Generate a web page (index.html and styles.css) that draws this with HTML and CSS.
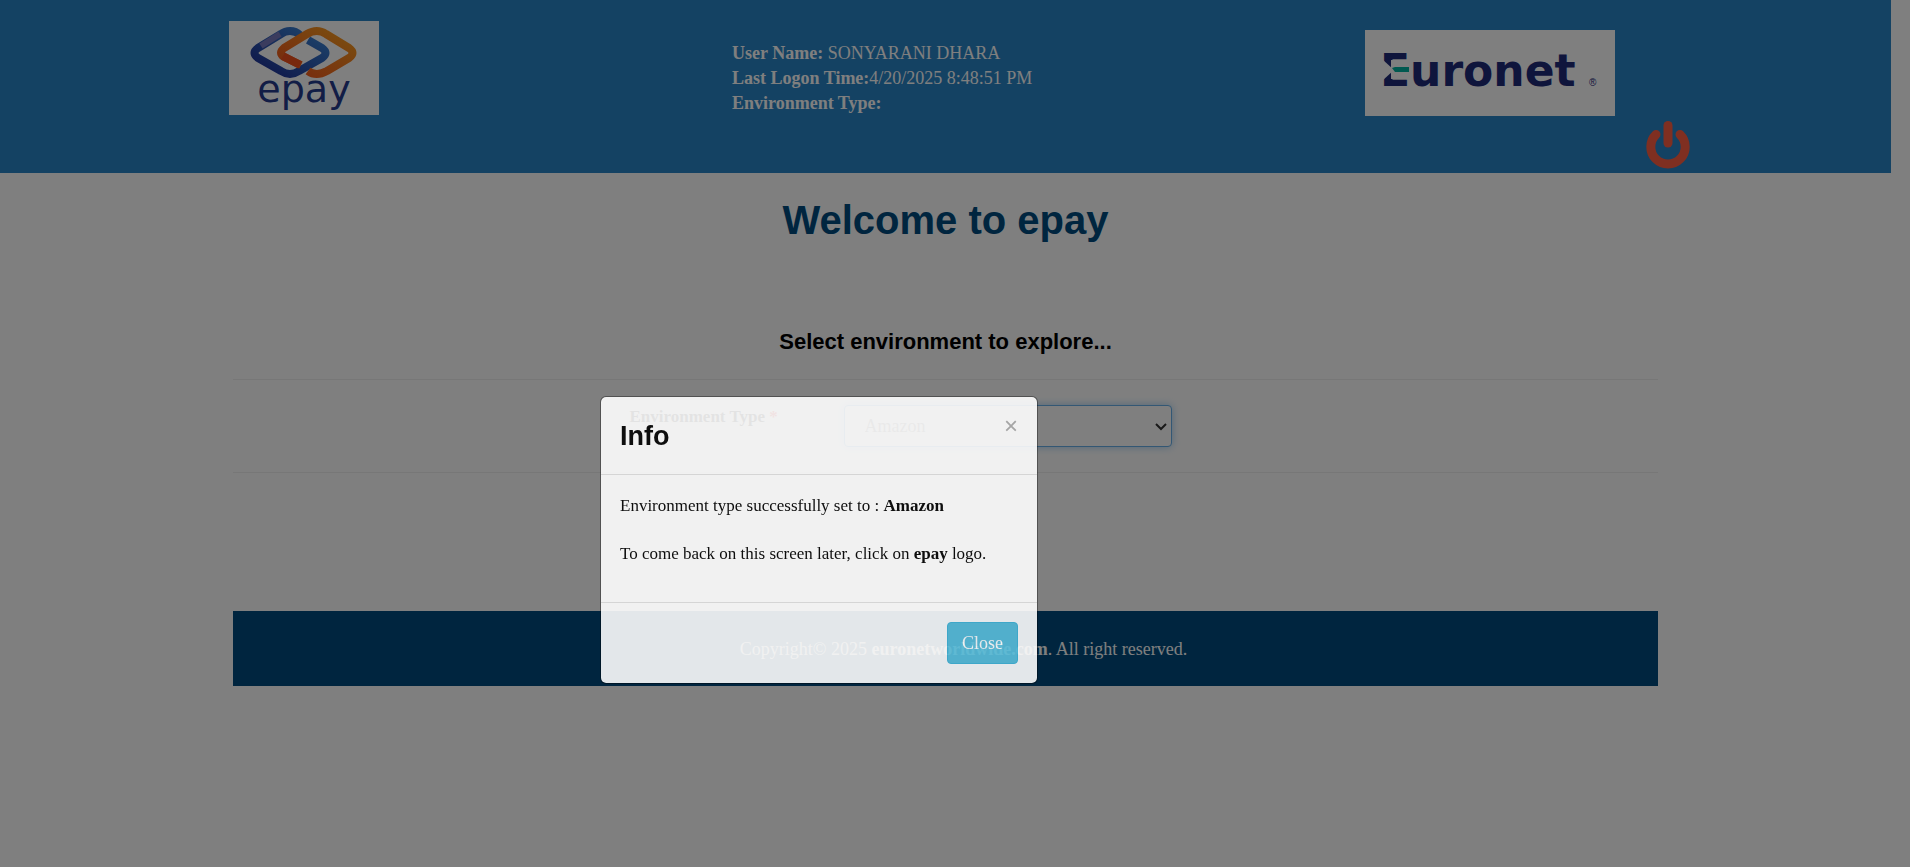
FILE: index.html
```html
<!DOCTYPE html>
<html lang="en">
<head>
<meta charset="utf-8">
<title>Welcome to epay</title>
<link rel="stylesheet" href="styles.css">
</head>
<body>
<div class="page">
  <header class="header">
    <a class="logo-epay" href="#" aria-label="epay home">
      <svg width="150" height="94" viewBox="0 0 150 94">
        <defs>
          <linearGradient id="blue" x1="0" y1="1" x2="1" y2="0"><stop offset="0" stop-color="#1c2a90"/><stop offset="1" stop-color="#3c8ad8"/></linearGradient>
          <linearGradient id="orange" x1="0" y1="1" x2="1" y2="0"><stop offset="0" stop-color="#f0501c"/><stop offset="1" stop-color="#f5a020"/></linearGradient>
        </defs>
        <rect width="150" height="94" fill="#fff"/>
        <g fill="none" stroke-width="8" stroke-linejoin="round">
          <path d="M71 14 Q67 10 61 10 Q56 10 52 13 L29 27 Q22 32 29 37 L52 50 Q61 56 70 50 L93 37 Q100 32 93 27 L79 19" stroke="url(#blue)"/>
          <path d="M72 44 L55 36 Q49 32 55 27 L78 13 Q88 7 97 13 L120 27 Q127 32 120 37 L98 50 Q87 56 79 50" stroke="url(#orange)"/>
          <path d="M32 25 L51 13" stroke="#7779bc" stroke-width="6"/>
          <path d="M54 35 L71 44" stroke="#f0501c"/>
        </g>
        <text class="epay-word" x="75" y="81" text-anchor="middle">epay</text>
      </svg>
    </a>
    <div class="session">
      <div><b>User Name:</b> SONYARANI DHARA</div>
      <div><b>Last Logon Time:</b>4/20/2025 8:48:51 PM</div>
      <div><b>Environment Type:</b></div>
    </div>
    <svg class="logo-euronet" width="250" height="86" viewBox="0 0 250 86">
      <rect width="250" height="86" fill="#fff"/>
      <text class="euronet-word" x="15" y="56">Euronet</text>
      <path d="M26 30 H46 V49 H26Z" fill="#fff"/>
      <path d="M17 29 L29 40 L17 51Z" fill="#fff"/>
      <path d="M27 38 L30 37 H44 V42 H30Z" fill="#00b3a0"/>
      <text class="registered" x="224" y="56">®</text>
    </svg>
    <button class="power" type="button" aria-label="Log out">
      <svg width="44" height="48" viewBox="0 0 44 48" fill="none" stroke="#ff5f43" stroke-width="9" stroke-linecap="round">
        <path d="M22 4.500V22"/>
        <path d="M10 13.500A17.200 17.200 0 1 0 34 13.500"/>
      </svg>
    </button>
  </header>
  <main class="content">
    <h1 class="title">Welcome to epay</h1>
    <h2 class="subtitle">Select environment to explore...</h2>
    <form class="env-form">
      <label class="env-label" for="env">Environment Type <span class="required">*</span></label>
      <div class="select-wrap">
        <select class="env-select" id="env"><option>Amazon</option></select>
        <svg class="chevron" width="12" height="8" viewBox="0 0 12 8" fill="none" stroke="#333" stroke-width="2"><path d="M1 1l5 5 5-5"/></svg>
      </div>
    </form>
    <footer class="footer">Copyright© 2025&nbsp;<b>euronetworldwide.com</b>. All right reserved.</footer>
  </main>
</div>
<div class="backdrop"></div>
<div class="modal" role="dialog" aria-labelledby="modal-title">
  <div class="modal-header">
    <h3 class="modal-title" id="modal-title">Info</h3>
    <button class="dismiss" type="button" aria-label="Dismiss">×</button>
  </div>
  <div class="modal-body">
    <p class="message">Environment type successfully set to : <b>Amazon</b></p>
    <p class="message">To come back on this screen later, click on <b>epay</b> logo.</p>
  </div>
  <div class="modal-footer">
    <button class="close" type="button">Close</button>
  </div>
</div>
</body>
</html>
```
FILE: styles.css
```css
* { box-sizing: border-box; }
body {
  margin: 0;
  background: #fff;
  color: #000;
  font-family: "Liberation Serif", serif;
  font-size: 18px;
  line-height: 25px;
}
.page { padding-right: 19px; }
.header {
  display: grid;
  grid-template-columns: 503fr 633fr 281fr 44px;
  align-items: start;
  padding: 0 201px 4px 229px;
  background: #2884c6;
  color: #fff;
}
.logo-epay { margin-top: 21px; }
.logo-epay svg, .logo-euronet, .power svg { display: block; }
.epay-word { font: 38px "DejaVu Sans", sans-serif; fill: #243a8c; }
.euronet-word { font: bold 44px "DejaVu Sans", sans-serif; fill: #1e2a78; }
.registered { font: 10px "Liberation Sans", sans-serif; fill: #1e2a78; }
.session { margin-top: 41px; }
.logo-euronet { margin-top: 30px; }
.power { margin: 121px 0 0; padding: 0; border: 0; background: none; }
.content { max-width: 1425px; margin: 0 auto; text-align: center; }
.title {
  margin: 0;
  padding-top: 24px;
  color: #004b7f;
  font: bold 40px/46px "Liberation Sans", sans-serif;
}
.subtitle {
  margin: 0;
  padding: 85px 0 24px;
  font: bold 22px/27px "Liberation Sans", sans-serif;
}
.env-form {
  display: grid;
  grid-template-columns: 214px 328px;
  justify-content: center;
  align-items: start;
  padding: 25px 90px 25px 0;
  border-top: 1px solid #eee;
  border-bottom: 1px solid #eee;
  text-align: left;
}
.env-label { font-size: 17px; font-weight: bold; line-height: 24px; }
.required { color: #f00; }
.select-wrap { position: relative; }
.chevron { position: absolute; right: 5px; top: 18px; pointer-events: none; }
.env-select {
  display: block;
  width: 100%;
  height: 42px;
  padding: 0 20px;
  border: 1px solid #66afe9;
  border-radius: 4px;
  outline: 0;
  appearance: none;
  background: #fff;
  box-shadow: 0 0 8px rgba(102, 175, 233, .6);
  color: #777;
  font: 18px "Liberation Serif", serif;
}
.footer {
  margin-top: 138px;
  padding: 26px 0 24px 36px;
  background: #004b7f;
  color: #fff;
}
.backdrop { position: fixed; inset: 0; background: rgba(0, 0, 0, .5); }
.modal {
  position: absolute;
  top: 396px;
  left: 600px;
  width: 438px;
  border: 1px solid rgba(0, 0, 0, .4);
  border-radius: 6px;
  background: #fff;
  background-clip: padding-box;
  opacity: .89;
}
.modal-header {
  display: flex;
  justify-content: space-between;
  align-items: flex-start;
  padding: 19px 19px 18px;
  border-bottom: 1px solid #e0e0e0;
}
.modal-title { margin: 0; font: bold 27px/40px "Liberation Sans", sans-serif; }
.dismiss {
  padding: 0;
  border: 0;
  background: none;
  color: #aaa;
  font: 24px/20px "Liberation Sans", sans-serif;
}
.modal-body { padding: 18px 19px 36px; }
.message { margin: 0; font-size: 17px; line-height: 25px; }
.message + .message { margin-top: 23px; }
.modal-footer {
  display: flex;
  justify-content: flex-end;
  padding: 19px;
  border-top: 1px solid #e0e0e0;
}
.close {
  padding: 8px 14px;
  border: 1px solid #46b8da;
  border-radius: 4px;
  background: #5bc0de;
  color: #fff;
  font: 18px/24px "Liberation Serif", serif;
}
```
